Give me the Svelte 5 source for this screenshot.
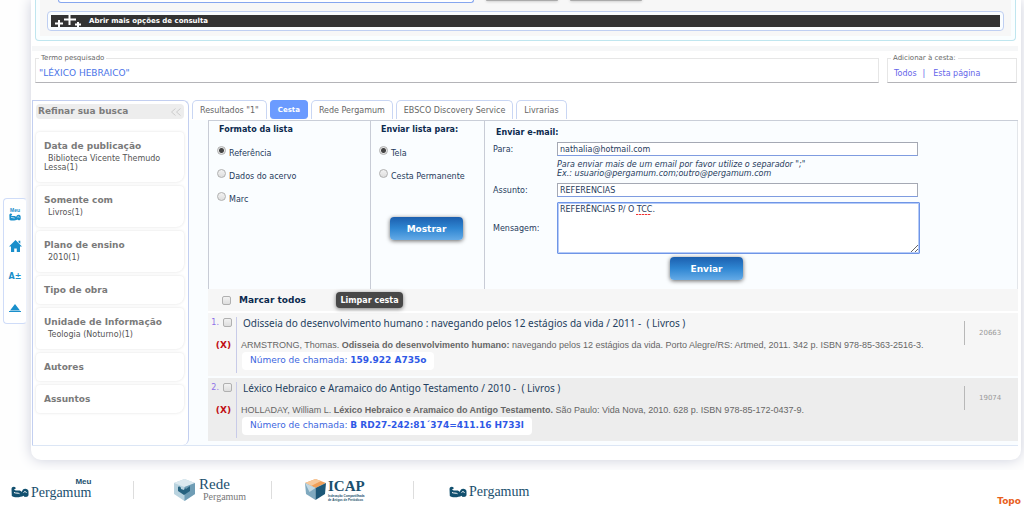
<script>
  let format = $state('Referência');
  let target = $state('Tela');
  let to = $state('nathalia@hotmail.com');
  let subject = $state('REFERÊNCIAS');
  let message = $state('REFERÊNCIAS P/ O TCC.');
  let activeTab = $state('Cesta');

  const tabs = ['Resultados "1"', 'Cesta', 'Rede Pergamum', 'EBSCO Discovery Service', 'Livrarias'];
  const formats = ['Referência', 'Dados do acervo', 'Marc'];
  const targets = ['Tela', 'Cesta Permanente'];

  const filters = [
    { title: 'Data de publicação', value: 'Biblioteca Vicente Themudo Lessa(1)' },
    { title: 'Somente com', value: 'Livros(1)' },
    { title: 'Plano de ensino', value: '2010(1)' },
    { title: 'Tipo de obra' },
    { title: 'Unidade de Informação', value: 'Teologia (Noturno)(1)' },
    { title: 'Autores' },
    { title: 'Assuntos' }
  ];

  const books = $state([
    {
      title: 'Odisseia do desenvolvimento humano : navegando pelos 12 estágios da vida / 2011 - \u00a0( Livros )',
      author: 'ARMSTRONG, Thomas.',
      name: 'Odisseia do desenvolvimento humano:',
      rest: 'navegando pelos 12 estágios da vida. Porto Alegre/RS: Artmed, 2011. 342 p. ISBN 978-85-363-2516-3.',
      call: '159.922 A735o',
      code: '20663',
      checked: false
    },
    {
      title: 'Léxico Hebraico e Aramaico do Antigo Testamento / 2010 - \u00a0( Livros )',
      author: 'HOLLADAY, William L.',
      name: 'Léxico Hebraico e Aramaico do Antigo Testamento.',
      rest: 'São Paulo: Vida Nova, 2010. 628 p. ISBN 978-85-172-0437-9.',
      call: 'B RD27-242:81´374=411.16 H733l',
      code: '19074',
      checked: false
    }
  ]);

  function markAll(e) {
    for (const b of books) b.checked = e.target.checked;
  }
</script>

{#snippet scroll()}
  <svg class="scroll" viewBox="0 0 18 12" aria-hidden="true">
    <path d="M.5 3C.5.5 3.500 0 4.500 1.500c.6 1.200-.5 2-1.500 1.500.5 2 3 1.500 5 1.500 1.500 0 2 .5 2.500 1.500L12 3.500C13.500 2 17.500 2.500 17.500 5.500v3.500c-.5 2.500-4 2.500-5 .8C10 11.500 3 12 .8 10z" />
    <path class="line" d="M3 6.500c2 1 4 .2 5.500 1.200M12.500 6.500c1-1.500 3-.8 2.800.4" />
  </svg>
{/snippet}

<nav class="float-menu">
  <a href="#meu" aria-label="Meu Pergamum">
    <span class="meu">Meu</span>
    {@render scroll()}
  </a>
  <a href="#home" aria-label="Início">
    <svg width="13" height="12" viewBox="0 0 13 12"><path d="M6.500 0 13 6.500H11V12H7.800V8.500H5.200V12H2V6.500H0zM9.500.8h1.800v3L9.500 2.200z" /></svg>
  </a>
  <a href="#fonte" class="font-size">A±</a>
  <a href="#topo" aria-label="Subir">
    <svg width="12" height="8" viewBox="0 0 12 8"><path d="M6 0l5 6.500H1zM0 7h12v1H0z" /></svg>
  </a>
</nav>

<div class="sheet">
  <section class="search">
    <div class="search-inner">
      <div class="search-row">
        <span class="query-end"></span>
        <span class="button-end"></span>
        <span class="button-end"></span>
      </div>
      <div class="more">
        <button type="button">
          <svg width="30" height="12" viewBox="0 0 30 12" aria-hidden="true">
            <path d="M4 8.500h8M8 5v7M13 4.500h12M18.500 0v10M24 9.500h6M27 7v5" />
          </svg>
          Abrir mais opções de consulta
        </button>
      </div>
    </div>
  </section>

  <div class="terms">
    <fieldset class="term">
      <legend>Termo pesquisado</legend>
      <a href="#termo">"LÉXICO HEBRAICO"</a>
    </fieldset>
    <fieldset class="add">
      <legend>Adicionar à cesta:</legend>
      <a href="#todos">Todos</a><b>|</b><a href="#pagina">Esta página</a>
    </fieldset>
  </div>

  <div class="columns">
    <aside>
      <h2>
        Refinar sua busca
        <svg width="12" height="8" viewBox="0 0 12 8" aria-hidden="true"><path d="M5.500.5 1.500 4l4 3.500M10.500.5l-4 3.500 4 3.500" /></svg>
      </h2>
      {#each filters as f}
        <div class="filter">
          <h3>{f.title}</h3>
          {#if f.value}
            <p>{f.value}</p>
          {/if}
        </div>
      {/each}
    </aside>

    <main>
      <div class="tabs" role="tablist">
        {#each tabs as tab}
          <button type="button" role="tab" aria-selected={tab === activeTab} class:active={tab === activeTab} onclick={() => (activeTab = tab)}>{tab}</button>
        {/each}
      </div>

      <div class="panel">
        <div class="options">
          <div class="choice formats">
            <h4>Formato da lista</h4>
            {#each formats as f}
              <label><input type="radio" name="format" value={f} bind:group={format} /><span>{f}</span></label>
            {/each}
          </div>

          <div class="choice targets">
            <h4>Enviar lista para:</h4>
            {#each targets as t}
              <label><input type="radio" name="target" value={t} bind:group={target} /><span>{t}</span></label>
            {/each}
            <button type="button" class="blue">Mostrar</button>
          </div>

          <form class="mail" onsubmit={(e) => e.preventDefault()}>
            <h4>Enviar e-mail:</h4>
            <div class="field">
              <label for="to">Para:</label>
              <input id="to" type="text" bind:value={to} />
            </div>
            <p class="hint">
              Para enviar mais de um email por favor utilize o separador ";"<br />
              Ex.: usuario@pergamum.com;outro@pergamum.com
            </p>
            <div class="field">
              <label for="subject">Assunto:</label>
              <input id="subject" type="text" bind:value={subject} />
            </div>
            <div class="field message">
              <label for="message">Mensagem:</label>
              <textarea id="message" bind:value={message}></textarea>
            </div>
            <button type="submit" class="blue">Enviar</button>
          </form>
        </div>

        <div class="mark-all">
          <input id="all" type="checkbox" onchange={markAll} />
          <label for="all">Marcar todos</label>
          <button type="button">Limpar cesta</button>
        </div>

        {#each books as book, i}
          <article>
            <div class="pick">
              <label>{i + 1}. <input type="checkbox" bind:checked={book.checked} /></label>
              <button type="button" aria-label="Remover">(X)</button>
            </div>
            <div class="book">
              <a href="#livro" class="title">{book.title}</a>
              <p>{book.author} <b>{book.name}</b> {book.rest}</p>
              <div class="call">Número de chamada: <b>{book.call}</b></div>
            </div>
            <span class="code">{book.code}</span>
          </article>
        {/each}
      </div>
    </main>
  </div>
</div>

<footer>
  <a href="#meu-pergamum" class="logo meu-logo">
    {@render scroll()}
    <span class="name"><small>Meu</small>Pergamum</span>
  </a>
  <a href="#rede" class="logo rede">
    <svg width="21" height="22" viewBox="0 0 21 22" aria-hidden="true">
      <path fill="#b9d3df" d="M10.500 0 21 4v11l-10.500 7L0 15V4z" />
      <path fill="#dce9ef" d="M10.500 0 21 4l-10.500 4L0 4z" />
      <path fill="#6f9db5" d="M10.500 8 21 4v11l-10.500 7z" />
      <path fill="#26627f" d="M4 8c2-1 3 0 3 2l3 1 1-2 1 1 4-3v5l-6 4-6-4z" />
    </svg>
    <span class="name">Rede<small>Pergamum</small></span>
  </a>
  <a href="#icap" class="logo icap">
    <svg width="21" height="21" viewBox="0 0 21 21" aria-hidden="true">
      <path fill="#f0a05a" d="M10.500 0 21 4l-10.500 5L0 4z" />
      <path fill="#f7c99b" d="M10.500 0 16 2 6 7 0 4z" />
      <path fill="#7fa9bf" d="M0 4l10.500 5v12L1 15z" />
      <path fill="#1d5878" d="M21 4 10.500 9v12L20 15z" />
      <path fill="#c3d8e2" d="M0 4l10.500 5-6 4z" />
    </svg>
    <span class="name">ICAP<small>Indexação Compartilhada<br />de Artigos de Periódicos</small></span>
  </a>
  <a href="#pergamum" class="logo">
    {@render scroll()}
    <span class="name">Pergamum</span>
  </a>
  <a href="#topo" class="top">Topo</a>
</footer>

<style>
  :global(body) {
    background: #fefefe;
    font-family: 'DejaVu Sans', Verdana, sans-serif;
    font-size: 8px;
    color: #555;
  }

  a {
    text-decoration: none;
  }

  button, input, textarea {
    font-family: inherit;
    box-sizing: border-box;
    margin: 0;
  }

  button {
    cursor: pointer;
  }

  h2, h3, h4, p {
    margin: 0;
  }

  .float-menu {
    position: absolute;
    left: 3px;
    top: 198px;
    z-index: 2;
    width: 24px;
    height: 126px;
    box-sizing: border-box;
    border: 1px solid #cfdcf8;
    border-right-color: #edf1fa;
    border-radius: 4px;
    background: #fff;
    display: flex;
    flex-direction: column;
    align-items: center;
  }

  .float-menu a {
    flex: 1;
    display: flex;
    flex-direction: column;
    align-items: center;
    justify-content: center;
    color: #1a8fcb;
    fill: #1a8fcb;
  }

  .float-menu .scroll {
    width: 12px;
    height: 8px;
  }

  .meu {
    font: bold 5px/5px 'Liberation Sans', Arial, sans-serif;
  }

  .font-size {
    font-size: 8px;
    font-weight: bold;
  }

  .scroll {
    width: 18px;
    height: 12px;
    flex: none;
  }

  .scroll .line {
    fill: none;
    stroke: #fff;
    stroke-width: 1;
  }

  .sheet {
    margin: 0 3px 0 31px;
    padding: 0 3px 14px 1px;
    border-radius: 0 0 10px 10px;
    background: #fff;
    box-shadow: 0 0 14px #cccfdc;
  }

  .search {
    margin: 0 2px 0 3px;
    padding: 0 4px 4px;
    border: 1px solid #bfe6ef;
    border-top: 0;
    border-radius: 0 0 4px 4px;
    background: #fafeff;
  }

  .search-inner {
    background: #f7f7f7;
    padding: 0 7px 5px;
  }

  .search-row {
    display: flex;
    gap: 12px;
    height: 11px;
    align-items: flex-start;
  }

  .query-end {
    width: 416px;
    height: 3px;
    box-sizing: border-box;
    margin-left: 11px;
    border: 1px solid #86a6ef;
    border-top: 0;
    border-radius: 0 0 4px 4px;
    background: #fff;
  }

  .button-end {
    width: 72px;
    height: 1px;
    border-radius: 0 0 4px 4px;
    background: #aaa;
    box-shadow: 0 0 3px #888;
  }

  .more {
    border: 1px solid #bfcff2;
    border-radius: 4px;
    background: #fafdff;
    padding: 3px;
  }

  .more button {
    display: flex;
    align-items: center;
    gap: 4px;
    width: 100%;
    height: 12px;
    padding: 0 4px 0 0;
    border: 0;
    background: #333;
    color: #fff;
    font-size: 7px;
    font-weight: bold;
  }

  .more svg {
    margin-right: 4px;
    fill: none;
    stroke: #fff;
    stroke-width: 2;
  }

  .terms {
    display: flex;
    gap: 8px;
    margin-top: 5px;
    padding: 3px 1px 0 3px;
    border-top: 5px solid #f6f7f8;
  }

  fieldset {
    box-sizing: border-box;
    height: 29px;
    margin: 0;
    padding: 5px 3px 0;
    border: 1px solid #e6e6e6;
    border-bottom-color: #b4b4b8;
    font-size: 8px;
  }

  legend {
    padding: 0 2px;
    font-size: 7px;
    line-height: 9px;
    color: #666;
  }

  .term {
    flex: 1;
  }

  .term a {
    font-size: 9px;
    color: #4a74e8;
  }

  .add {
    width: 130px;
    padding: 6px 4px 0 6px;
    white-space: nowrap;
  }

  .add legend {
    margin-left: -3px;
  }

  .add a, .add b {
    color: #6666ea;
  }

  .add b {
    margin: 0 8px 0 6px;
    font-weight: normal;
  }

  .columns {
    display: flex;
    margin-top: 17px;
    border-bottom: 1px solid #dce6f5;
    background: #fafdff;
  }

  aside {
    width: 157px;
    flex: none;
    box-sizing: border-box;
    padding: 3px 4px 0 3px;
    border: 1px solid #c3cff0;
    border-bottom: 0;
    border-radius: 0 6px 6px 0;
    background: #fff;
  }

  aside h2 {
    display: flex;
    justify-content: space-between;
    align-items: center;
    margin-bottom: 13px;
    padding: 0 2px;
    background: #ededed;
    border-radius: 4px;
    font-size: 9px;
    line-height: 15px;
    color: #7c7c7c;
  }

  aside h2 svg {
    fill: none;
    stroke: #ccc;
  }

  .filter {
    margin-bottom: 4px;
    padding: 8px 12px 8px 8px;
    border-radius: 4px 4px 8px 4px;
    box-shadow: 0 0 3px #e0e0e0;
  }

  .filter h3 {
    font-size: 9px;
    line-height: 12px;
    color: #7a7a7a;
    white-space: nowrap;
  }

  .filter p {
    line-height: 9px;
    padding: 2px 0;
    text-indent: 4px;
    color: #555;
  }

  main {
    flex: 1;
    min-width: 0;
  }

  .tabs {
    display: flex;
    gap: 3px;
    padding-left: 3px;
    background: #fff;
  }

  .tabs button {
    height: 19px;
    margin-bottom: 1px;
    padding: 0 7px;
    border: 1px solid #c9d6f3;
    border-bottom: 0;
    border-radius: 5px 5px 0 0;
    background: #fff;
    color: #666;
    font-size: 8px;
  }

  .tabs .active {
    border-color: #6b9bff;
    border-radius: 4px;
    background: #6b9bff;
    color: #fff;
    font-weight: bold;
    font-size: 7px;
  }

  .panel {
    margin-left: 19px;
    border-top: 1px solid #c9ced8;
    padding-bottom: 4px;
  }

  .options {
    display: flex;
    height: 168px;
    border-right: 1px solid #e3e6ea;
    color: #1f3b5c;
  }

  h4 {
    font-size: 8px;
    line-height: 10px;
    color: #0b2a4e;
    white-space: nowrap;
  }

  .choice {
    box-sizing: border-box;
    padding: 4px 0 0 8px;
    border-left: 1px solid #c8ccd6;
  }

  .choice h4 {
    padding-left: 2px;
    margin-bottom: 11px;
  }

  .formats {
    width: 162px;
  }

  .targets {
    width: 114px;
  }

  .choice label {
    display: flex;
    gap: 3px;
    height: 23px;
  }

  .choice label span {
    padding-top: 3px;
  }

  input[type='radio'], input[type='checkbox'] {
    appearance: none;
    flex: none;
    width: 9px;
    height: 9px;
    border: 1px solid #b0b0b0;
    border-radius: 2px;
    background: linear-gradient(#f2f2f2, #dedede);
  }

  input[type='radio'] {
    border-radius: 50%;
  }

  input[type='radio']:checked {
    background: radial-gradient(circle, #444 0 2px, #e6e6e6 3px);
  }

  input[type='checkbox']:checked {
    background: #6b9bff;
  }

  .blue {
    display: block;
    width: 73px;
    height: 23px;
    border: 0;
    border-radius: 4px;
    background: linear-gradient(#1c5fae, #2f86d2 50%, #64aae6);
    box-shadow: 0 1px 4px #666;
    color: #fff;
    font-size: 9px;
    font-weight: bold;
  }

  .targets .blue {
    margin: 25px 0 0 11px;
  }

  .mail {
    flex: 1;
    padding: 7px 97px 0 8px;
    border-left: 1px solid #c8ccd6;
  }

  .mail h4 {
    padding-left: 3px;
    margin-bottom: 4px;
  }

  .field {
    display: flex;
    align-items: center;
  }

  .field label {
    width: 64px;
    flex: none;
  }

  .field input {
    flex: 1;
    height: 14px;
    margin-right: 2px;
    padding: 0 2px;
    border: 1px solid #a5a9b4;
    border-bottom-color: #7f9ce0;
    background: #fff;
    font-size: 8px;
    line-height: 12px;
    color: #1f3b5c;
  }

  .hint {
    margin: 4px 0 5px 64px;
    font-style: italic;
    line-height: 9px;
    white-space: nowrap;
  }

  .message {
    margin-top: 5px;
  }

  /* the red strip stands under the word the spell checker marks */
  textarea {
    flex: 1;
    height: 52px;
    padding: 1px 2px;
    border: 1px solid #6f95e6;
    border-radius: 1px;
    outline: 1px solid #b5cbf8;
    outline-offset: -2px;
    background: repeating-linear-gradient(90deg, #e33 0 2px, #fbb 2px 3px) 78px 11px / 15px 1px no-repeat #fff;
    font-size: 8px;
    line-height: 11px;
    color: #1f3b5c;
    resize: both;
  }

  .mail .blue {
    margin: 3px 0 0 177px;
  }

  .mark-all {
    display: flex;
    align-items: center;
    height: 22px;
    padding-left: 14px;
    border-bottom: 2px solid #fff;
    background: #f6f6f6;
  }

  .mark-all label {
    width: 96px;
    padding-left: 8px;
    box-sizing: border-box;
    font-size: 9px;
    font-weight: bold;
    color: #0b2a4e;
  }

  .mark-all button {
    width: 67px;
    height: 16px;
    margin-left: 9px;
    padding: 0;
    border: 0;
    border-radius: 4px;
    background: #484848;
    box-shadow: 0 1px 4px #777;
    color: #fff;
    font-size: 8px;
    font-weight: bold;
    white-space: nowrap;
  }

  article {
    display: flex;
    height: 63px;
    background: #f6f6f6;
  }

  article:last-child {
    margin-top: 2px;
    background: #ededed;
  }

  .pick {
    width: 28px;
    flex: none;
    padding-top: 5px;
    text-align: right;
  }

  .pick label {
    display: flex;
    align-items: center;
    justify-content: flex-end;
    gap: 4px;
    padding-right: 4px;
    color: #8f70e8;
  }

  .pick button {
    margin-top: 12px;
    padding: 0 5px 0 0;
    border: 0;
    background: none;
    color: #c00d14;
    font-size: 9px;
    font-weight: bold;
    line-height: 12px;
  }

  .book {
    flex: 1;
    margin: 4px 0 3px;
    padding-left: 4px;
    border-left: 1px solid #c8cbe8;
    white-space: nowrap;
  }

  .title {
    display: block;
    padding-left: 2px;
    font: 10px/12px 'Noto Sans', Tahoma, sans-serif;
    color: #1f3f60;
  }

  .book p {
    margin: 10px 0 1px;
    font: 9px/12px 'Liberation Sans', Arial, sans-serif;
    color: #666;
  }

  .call {
    display: inline-block;
    padding: 2px 8px 4px;
    margin-left: 1px;
    border-radius: 4px;
    background: #fff;
    font-size: 9px;
    line-height: 12px;
    color: #3c66e0;
  }

  .call b {
    color: #2f59e6;
  }

  .code {
    width: 39px;
    height: 24px;
    margin: 8px 0 0;
    padding-left: 14px;
    border-left: 1px solid #b8b8b8;
    font-size: 7px;
    line-height: 24px;
    color: #999;
  }

  footer {
    display: flex;
    align-items: center;
    height: 39px;
    margin-top: 10px;
    padding: 0 3px 0 11px;
    position: relative;
    background: #fff;
  }

  .logo {
    display: flex;
    align-items: center;
    gap: 2px;
    height: 18px;
    width: 122px;
    border-right: 1px solid #ddd;
    fill: #12506f;
  }

  .logo .scroll {
    margin-top: 4px;
  }

  .name {
    font: 14px/16px 'Liberation Serif', Georgia, serif;
    color: #1b506e;
  }

  .meu-logo .name {
    line-height: 14px;
    margin-bottom: 2px;
  }

  .meu-logo small {
    display: block;
    font: bold 8px/8px 'Liberation Sans', Arial, sans-serif;
    text-align: right;
  }

  .rede {
    width: 97px;
    padding-left: 40px;
  }

  .rede .name {
    margin-left: 2px;
    font-size: 15px;
    line-height: 15px;
  }

  .rede small, .icap small {
    display: block;
  }

  .rede small {
    padding-left: 4px;
    font-size: 10px;
    line-height: 10px;
    color: #777;
  }

  .icap {
    width: 108px;
    padding-left: 33px;
  }

  .icap .name {
    font-weight: bold;
    font-size: 15px;
  }

  .icap small {
    font: bold 3px/4px 'Liberation Sans', Arial, sans-serif;
  }

  .logo:nth-child(4) {
    padding-left: 35px;
    border: 0;
  }

  .logo:nth-child(4) .name {
    margin-top: 4px;
  }

  .top {
    margin-left: auto;
    padding-top: 22px;
    font-size: 9px;
    font-weight: bold;
    color: #e8601c;
  }
</style>
